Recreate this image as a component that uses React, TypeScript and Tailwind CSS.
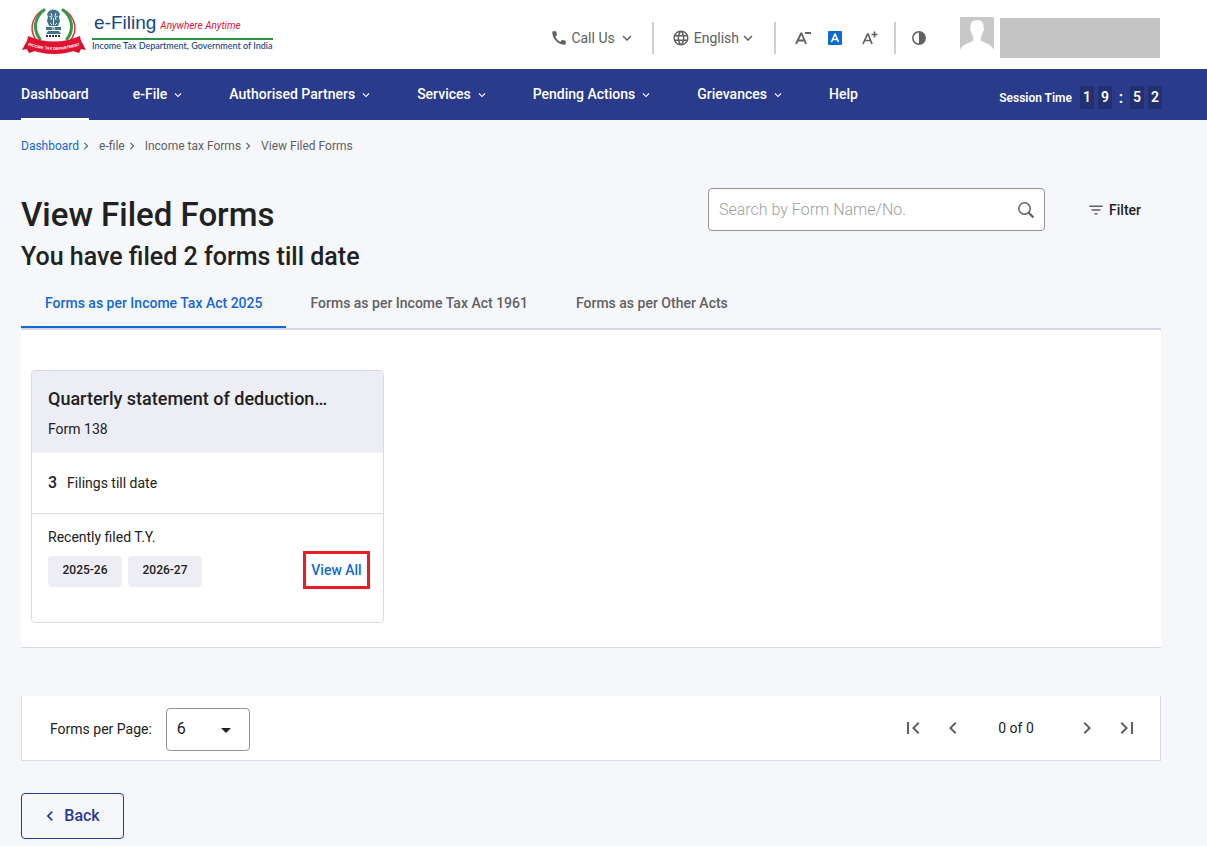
import React from "react";
import {
  MdCall,
  MdChevronLeft,
  MdChevronRight,
  MdExpandMore,
  MdFilterList,
  MdFirstPage,
  MdLastPage,
  MdArrowDropDown,
  MdLanguage,
} from "react-icons/md";

const menu = [
  { label: "Dashboard", active: true, sub: false },
  { label: "e-File", active: false, sub: true },
  { label: "Authorised Partners", active: false, sub: true },
  { label: "Services", active: false, sub: true },
  { label: "Pending Actions", active: false, sub: true },
  { label: "Grievances", active: false, sub: true },
  { label: "Help", active: false, sub: false },
];

const tabs = [
  "Forms as per Income Tax Act 2025",
  "Forms as per Income Tax Act 1961",
  "Forms as per Other Acts",
];

function Emblem() {
  return (
    <svg viewBox="0 0 66 48" className="h-12 w-[66px]" aria-hidden="true">
      <g fill="none" strokeLinecap="round">
        <path d="M20 3C10 11 8 23 16 33" stroke="#d9343f" strokeWidth="1.500" />
        <path d="M45 3C55 11 57 23 49 33" stroke="#d9343f" strokeWidth="1.500" />
        <path d="M23 2C13 10 12 22 19 31" stroke="#2f9a48" strokeWidth="3" strokeDasharray="3 1" />
        <path d="M42 2C52 10 53 22 46 31" stroke="#2f9a48" strokeWidth="3" strokeDasharray="3 1" />
      </g>
      <g fill="#44718c">
        <path d="M28 3q4-3 9 0l2 3-1 3 1 4-2 5h-9l-2-5 1-4-1-3z" />
        <path d="M25 19h15v3H25zM27 23h11l2 3H25z" />
      </g>
      <g stroke="#e6eef3" strokeWidth="1" fill="none">
        <path d="M30 5l1 3-1 4M35 5l-1 3 1 4M28 8l2 1M37 8l-2 1M32.500 10v7M29 15l2 2M36 15l-2 2" />
        <circle cx="32.500" cy="20.500" r="1.200" />
      </g>
      <path d="M25 28h15" stroke="#333" strokeWidth="2" strokeDasharray="2 1" />
      <path d="M7 31L1 42l5-1 2 4 6-2z" fill="#c80f2a" />
      <path d="M59 31l6 11-5-1-2 4-6-2z" fill="#c80f2a" />
      <path d="M7 28q26 11 52 0l2 12q-28 12-56 0z" fill="#e1132f" />
      <path id="ribbonText" d="M5 36.500q28 11 56 0" fill="none" />
      <text fontFamily="Liberation Sans, sans-serif" fontSize="4" fontWeight="700" fill="#fff">
        <textPath href="#ribbonText" startOffset="50%" textAnchor="middle">
          INCOME TAX DEPARTMENT
        </textPath>
      </text>
    </svg>
  );
}

function Divider() {
  return <span className="h-8 w-0.5 bg-[#cfcfcf]" />;
}

function Header() {
  return (
    <header className="flex h-[69px] items-start justify-between bg-white pr-[47px] pl-[21px]">
      <a href="#home" className="flex items-start pt-2">
        <Emblem />
        <span className="ml-[5px] flex flex-col pt-0.5">
          <span className="flex items-baseline gap-1 border-b-2 border-[#2a9343] px-0.5 leading-[25px]">
            <span className="font-['Liberation_Sans',sans-serif] text-[19px] text-[#124684]">e-Filing</span>
            <span className="text-[10px] text-[#e0102f] italic">Anywhere Anytime</span>
          </span>
          <span className="font-[Lato,sans-serif] text-[9px] leading-3 font-medium whitespace-nowrap text-[#124684]">
            Income Tax Department, Government of India
          </span>
        </span>
      </a>

      <div className="flex items-start text-[#616161]">
        <div className="flex items-center pt-[22px]">
          <button type="button" className="mr-4 flex items-center text-sm">
            <MdCall className="mr-[3px] size-[18px]" />
            Call Us
            <MdExpandMore className="ml-[3px] size-[18px]" />
          </button>
          <Divider />
          <button type="button" className="mr-[17px] ml-[18px] flex items-center text-sm">
            <MdLanguage className="mr-1 size-[18px]" />
            English
            <MdExpandMore className="size-[18px]" />
          </button>
          <Divider />
          <button type="button" aria-label="Decrease text size" className="ml-[19px]">
            <svg viewBox="0 0 17 16" className="h-4 w-[17px]" fill="none" stroke="currentColor" strokeWidth="1.800">
              <path d="M1 14L6 3.500h.6L11 14M3 10.500h7M10 3h6" />
            </svg>
          </button>
          <button type="button" aria-label="Default text size" className="ml-4">
            <svg viewBox="0 0 14 14" className="size-3.5">
              <rect width="14" height="14" rx="1" fill="#0b6bd3" />
              <path d="M3.500 11L6.800 3.200h.4L10.500 11M4.700 8.500h4.600" fill="none" stroke="#fff" strokeWidth="1.600" />
            </svg>
          </button>
          <button type="button" aria-label="Increase text size" className="ml-5">
            <svg viewBox="0 0 17 16" className="h-4 w-[17px]" fill="none" stroke="currentColor" strokeWidth="1.700">
              <path d="M1 14L5.500 4h.6L10 14M2.500 10.500h6.500M9.500 4.500h6M12.500 1.500v6" />
            </svg>
          </button>
          <span className="ml-[15px] flex">
            <Divider />
          </span>
          <button type="button" aria-label="Toggle contrast" className="ml-4">
            <svg viewBox="0 0 14 14" className="size-3.5">
              <circle cx="7" cy="7" r="6.200" fill="none" stroke="currentColor" strokeWidth="1.500" />
              <path d="M7 1a6 6 0 0 1 0 12z" fill="currentColor" />
            </svg>
          </button>
        </div>
        <svg viewBox="0 0 34 34" className="mt-[17px] ml-[34px] size-[34px]" role="img" aria-label="Profile">
          <rect width="34" height="34" rx="1" fill="#c8c8c8" />
          <path
            d="M17 3c-5 0-7 3-6.500 8-1 .5-.5 3 .8 4 .5 3 1.500 4 2 5v3c-1 3-11 3-13.300 10v1h34v-1C31.500 26 22 26 20.800 23v-3c.6-1 1.500-2 2-5 1.300-1 1.700-3.500.7-4C24 6 22 3 17 3z"
            fill="#fff"
          />
        </svg>
        <span className="mt-[18px] ml-1.5 h-10 w-40 bg-[#c4c4c4]" />
      </div>
    </header>
  );
}

function TimeDigit({ value }: { value: string }) {
  return <span className="w-3.5 bg-[#23306f] text-center leading-[23px]">{value}</span>;
}

function MainNav() {
  return (
    <nav className="flex h-[51px] justify-between bg-[#2a3b8c] pr-[45px] pl-[21px] text-white">
      <ul className="flex gap-11 text-sm font-medium">
        {menu.map((item) => (
          <li key={item.label} className="flex">
            <a
              href="#menu"
              className={
                item.active
                  ? "flex items-center border-b-2 border-white"
                  : "flex items-center border-b-2 border-transparent"
              }
            >
              {item.label}
              {item.sub && <MdExpandMore className="mt-0.5 ml-1 size-3.5" />}
            </a>
          </li>
        ))}
      </ul>
      <div className="flex items-center gap-1 pt-1.5 text-sm font-semibold">
        <span className="mr-1 text-xs">Session Time</span>
        <TimeDigit value="1" />
        <TimeDigit value="9" />
        <span className="w-2.5 text-center text-base leading-5">:</span>
        <TimeDigit value="5" />
        <TimeDigit value="2" />
      </div>
    </nav>
  );
}

function Breadcrumb() {
  const rest = ["e-file", "Income tax Forms", "View Filed Forms"];
  return (
    <nav aria-label="Breadcrumb" className="pt-[18px]">
      <ol className="flex items-center text-xs text-[#616161]">
        <li>
          <a href="#dashboard" className="text-[#1568d0]">
            Dashboard
          </a>
        </li>
        {rest.map((label) => (
          <li key={label} className="flex items-center">
            <MdChevronRight className="mr-1.5 size-3.5" />
            {label}
          </li>
        ))}
      </ol>
    </nav>
  );
}

function FormCard() {
  return (
    <article className="h-[253px] w-[353px] rounded border border-[#d8daea]">
      <div className="h-[82px] rounded-t bg-[#ededf6] px-4 pt-4">
        <h3 className="text-lg leading-6 font-medium">Quarterly statement of deduction…</h3>
        <p className="pt-2 text-sm leading-5">Form 138</p>
      </div>
      <div className="flex h-[61px] items-center gap-2.5 border-b border-[#d8daea] px-4">
        <span className="text-base font-medium">3</span>
        <span className="text-sm">Filings till date</span>
      </div>
      <div className="px-4 pt-[13px]">
        <p className="text-sm leading-5">Recently filed T.Y.</p>
        <div className="flex items-start gap-1.5 pt-1">
          <span className="mt-[5px] h-[31px] w-[74px] rounded bg-[#ededf6] text-center text-xs leading-7 font-medium">
            2025-26
          </span>
          <span className="mt-[5px] h-[31px] w-[74px] rounded bg-[#ededf6] text-center text-xs leading-7 font-medium">
            2026-27
          </span>
          <button
            type="button"
            className="-mr-[3px] ml-auto h-[38px] w-[67px] border-3 border-[#ed1c24] text-sm font-medium text-[#1568d0]"
          >
            View All
          </button>
        </div>
      </div>
    </article>
  );
}

function Pager() {
  return (
    <section className="mt-12 flex h-[65px] items-center justify-between border-x border-b border-[#d8daea] bg-white pr-[21px] pl-7">
      <div className="flex items-center gap-3.5 pt-0.5">
        <label htmlFor="perPage" className="text-sm">
          Forms per Page:
        </label>
        <div className="relative">
          <select
            id="perPage"
            defaultValue="6"
            className="h-[43px] w-[84px] appearance-none rounded border border-[#949494] bg-white pl-2.5 text-base"
          >
            <option>6</option>
            <option>12</option>
            <option>24</option>
          </select>
          <MdArrowDropDown className="pointer-events-none absolute top-2.5 right-3 size-6" />
        </div>
      </div>
      <div className="flex items-center gap-4 text-[#616161]">
        <button type="button" aria-label="First page">
          <MdFirstPage className="size-6" />
        </button>
        <button type="button" aria-label="Previous page">
          <MdChevronLeft className="size-6" />
        </button>
        <span className="w-[78px] pr-2 text-center text-sm text-[#212121]">0 of 0</span>
        <button type="button" aria-label="Next page">
          <MdChevronRight className="size-6" />
        </button>
        <button type="button" aria-label="Last page">
          <MdLastPage className="size-6" />
        </button>
      </div>
    </section>
  );
}

export default function App() {
  return (
    <div className="min-h-screen bg-[#f5f7fb] font-[Roboto,sans-serif] text-[#212121]">
      <Header />
      <MainNav />
      <main className="pr-[46px] pb-[7px] pl-[21px]">
        <Breadcrumb />
        <div className="flex items-start justify-between pt-[34px]">
          <div>
            <h1 className="pt-[7px] text-[33px] leading-10 font-medium">View Filed Forms</h1>
            <p className="pt-1 text-[25px] leading-9 font-medium">You have filed 2 forms till date</p>
          </div>
          <div className="flex items-center pr-5">
            <div className="flex h-[43px] w-[337px] items-center rounded border border-[#949494] bg-white px-2.5">
              <input
                type="search"
                aria-label="Search by Form Name/No."
                placeholder="Search by Form Name/No."
                className="min-w-0 flex-1 text-base font-light outline-none placeholder:text-[#9e9e9e]"
              />
              <button type="submit" aria-label="Search">
                <svg viewBox="0 0 16 16" className="size-4" fill="none" stroke="#616161">
                  <circle cx="6.500" cy="6.500" r="5.700" strokeWidth="1.500" />
                  <path d="M10.500 10.500l5 5" strokeWidth="2.200" />
                </svg>
              </button>
            </div>
            <button type="button" className="ml-[42px] flex items-center gap-1 text-sm font-medium">
              <MdFilterList className="size-[18px] text-[#616161]" />
              Filter
            </button>
          </div>
        </div>

        <div role="tablist" className="mt-1 flex border-b-2 border-[#d3d6e8] text-sm font-medium">
          {tabs.map((label, i) => (
            <button
              key={label}
              type="button"
              role="tab"
              aria-selected={i === 0}
              className={
                i === 0
                  ? "h-[49px] border-b-2 border-[#0b6bd3] px-6 text-[#1568d0]"
                  : "h-[49px] border-b-2 border-transparent px-6 text-[#616161]"
              }
            >
              {label}
            </button>
          ))}
        </div>
        <section className="border-b border-[#d8daea] bg-white px-2.5 pt-10 pb-6">
          <FormCard />
        </section>

        <Pager />

        <button
          type="button"
          className="mt-8 flex h-[46px] w-[103px] items-center justify-center gap-1 rounded border border-[#2a3b8c] pr-[5px] text-base font-medium text-[#2a3b8c]"
        >
          <MdChevronLeft className="size-5" />
          Back
        </button>
      </main>
    </div>
  );
}
